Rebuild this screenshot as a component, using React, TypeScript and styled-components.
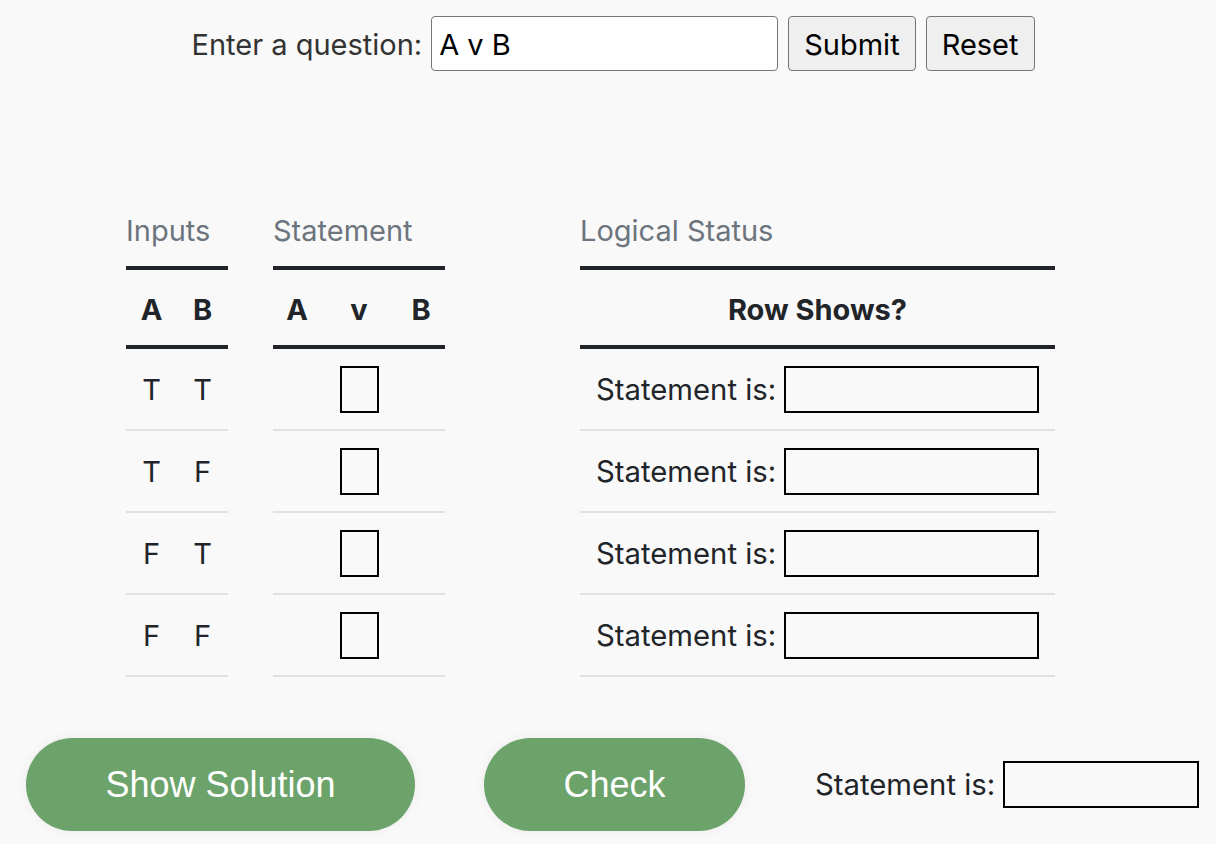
import React from "react";
import styled, { createGlobalStyle } from "styled-components";

const GlobalStyle = createGlobalStyle`
  html, body {
    margin: 0;
    padding: 0;
    background: #f9f9f9;
  }
  body {
    font-family: "Inter", "Liberation Sans", sans-serif;
    color: #212529;
  }
  * { box-sizing: border-box; }
`;

const Page = styled.div`
  width: 1216px;
  height: 844px;
  overflow: hidden;
  background: #f9f9f9;
`;

const QuestionBar = styled.div`
  display: flex;
  align-items: center;
  justify-content: center;
  gap: 10px;
  padding-top: 16px;
  padding-left: 10px;
  font-family: "Inter", "Liberation Sans", sans-serif;
`;

const QuestionLabel = styled.label`
  font-size: 29px;
  color: #333;
  margin-right: -1px;
  padding-top: 2px;
`;

const QuestionInput = styled.input`
  width: 347px;
  height: 55px;
  border: 1px solid #767676;
  border-radius: 4px;
  background: #fff;
  padding: 2px 7px 0;
  font-family: "Inter", "Liberation Sans", sans-serif;
  font-size: 29px;
  color: #000;
  outline: none;
`;

const BarButton = styled.button`
  height: 55px;
  padding: 2px 15px 0;
  border: 1px solid #767676;
  border-radius: 4px;
  background: #efefef;
  font-family: "Inter", "Liberation Sans", sans-serif;
  font-size: 29px;
  color: #000;
`;

const Tables = styled.div`
  display: flex;
  align-items: flex-start;
  padding-left: 126px;
  margin-top: 143px;
`;

const Group = styled.div<{ $w: number; $gap: number }>`
  width: ${(p) => p.$w}px;
  margin-right: ${(p) => p.$gap}px;
  display: flex;
  flex-direction: column;
`;

const Caption = styled.div`
  font-size: 29px;
  line-height: 34px;
  height: 34px;
  color: #6c757d;
  margin-bottom: 18px;
  white-space: nowrap;
`;

const Row = styled.div<{ $cols: string; $head?: boolean }>`
  display: grid;
  grid-template-columns: ${(p) => p.$cols};
  align-items: center;
  justify-items: center;
  height: ${(p) => (p.$head ? 83 : 82)}px;
  padding-top: ${(p) => (p.$head ? 3 : 0)}px;
  border-top: ${(p) => (p.$head ? "4px solid #212529" : "none")};
  border-bottom: ${(p) => (p.$head ? "4px solid #212529" : "2px solid #dee2e6")};
  font-size: 29px;
  font-weight: ${(p) => (p.$head ? 700 : 400)};
  color: #212529;
`;

const StatusRow = styled(Row)`
  justify-items: start;
  padding-left: 16px;
`;

const HeadCell = styled.div`
  justify-self: center;
  white-space: nowrap;
`;

const Box = styled.input`
  width: 39px;
  height: 47px;
  border: 2px solid #000;
  background: transparent;
  padding: 0;
  outline: none;
`;

const StatusCell = styled.div`
  display: flex;
  align-items: center;
  gap: 8px;
  font-size: 29.3px;
  color: #212529;
  white-space: nowrap;
`;

const StatusInput = styled.input<{ $w: number }>`
  width: ${(p) => p.$w}px;
  height: 47px;
  border: 2px solid #000;
  background: transparent;
  padding: 0 6px;
  outline: none;
`;

const Footer = styled.div`
  display: flex;
  align-items: center;
  padding-left: 26px;
  margin-top: 61px;
`;

const PillButton = styled.button<{ $w: number; $gap: number }>`
  width: ${(p) => p.$w}px;
  height: 93px;
  margin-right: ${(p) => p.$gap}px;
  border: none;
  border-radius: 47px;
  background: #6ba36b;
  color: #fff;
  font-family: "Liberation Sans", Arial, sans-serif;
  font-size: 36px;
  box-shadow: 0 0 12px rgba(0, 0, 0, 0.06);
  cursor: pointer;
`;

const rows = [
  ["T", "T"],
  ["T", "F"],
  ["F", "T"],
  ["F", "F"],
];

export default function App() {
  return (
    <Page>
      <GlobalStyle />
      <QuestionBar>
        <QuestionLabel>Enter a question:</QuestionLabel>
        <QuestionInput defaultValue="A v B" />
        <BarButton>Submit</BarButton>
        <BarButton>Reset</BarButton>
      </QuestionBar>

      <Tables>
        <Group $w={102} $gap={45}>
          <Caption>Inputs</Caption>
          <Row $cols="1fr 1fr" $head>
            <HeadCell>A</HeadCell>
            <HeadCell>B</HeadCell>
          </Row>
          {rows.map((r, i) => (
            <Row key={i} $cols="1fr 1fr">
              <div>{r[0]}</div>
              <div>{r[1]}</div>
            </Row>
          ))}
        </Group>

        <Group $w={172} $gap={135}>
          <Caption>Statement</Caption>
          <Row $cols="48px 76px 48px" $head>
            <HeadCell>A</HeadCell>
            <HeadCell>v</HeadCell>
            <HeadCell>B</HeadCell>
          </Row>
          {rows.map((_, i) => (
            <Row key={i} $cols="48px 76px 48px">
              <div />
              <Box />
              <div />
            </Row>
          ))}
        </Group>

        <Group $w={475} $gap={0}>
          <Caption>Logical Status</Caption>
          <Row $cols="1fr" $head>
            <HeadCell>Row Shows?</HeadCell>
          </Row>
          {rows.map((_, i) => (
            <StatusRow key={i} $cols="1fr">
              <StatusCell>
                Statement is:
                <StatusInput $w={255} />
              </StatusCell>
            </StatusRow>
          ))}
        </Group>
      </Tables>

      <Footer>
        <PillButton $w={389} $gap={69}>Show Solution</PillButton>
        <PillButton $w={261} $gap={70}>Check</PillButton>
        <StatusCell>
          Statement is:
          <StatusInput $w={196} />
        </StatusCell>
      </Footer>
    </Page>
  );
}
